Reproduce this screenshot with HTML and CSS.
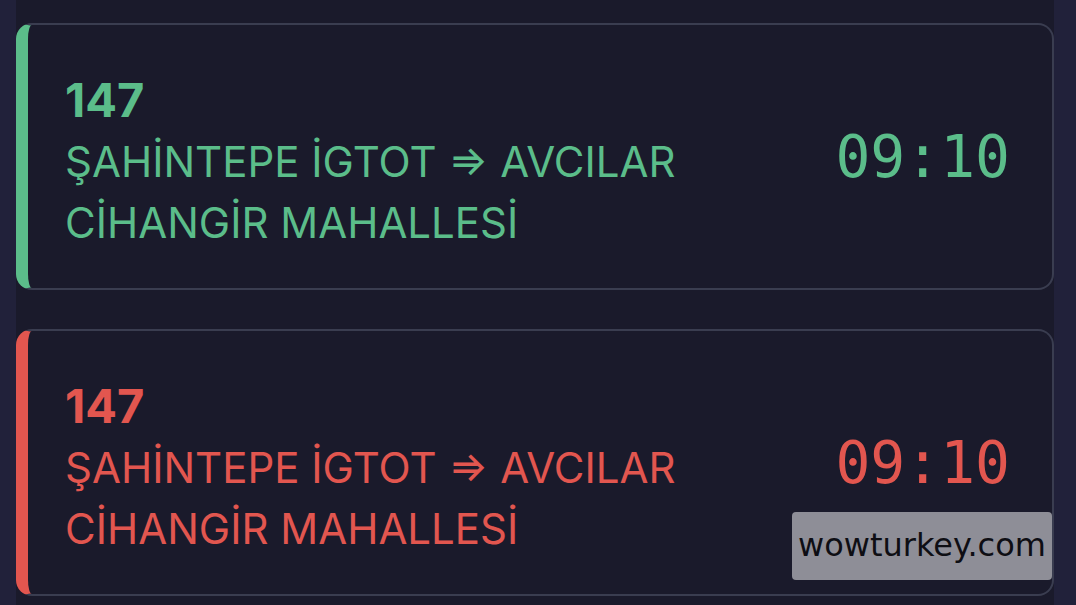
FILE: index.html
```html
<!DOCTYPE html>
<html lang="tr">
<head>
    <meta charset="UTF-8">
    <meta name="viewport" content="width=device-width, initial-scale=1.0">
    <title>Sefer Saatleri</title>
    <link rel="stylesheet" href="styles.css">
</head>
<body>

<div class="liste">
    <div class="sefer sefer-aktif">
        <div class="sefer-bilgi">
            <div class="hat-no">147</div>
            <div class="guzergah">ŞAHİNTEPE İGTOT ⇒ AVCILAR<br>CİHANGİR MAHALLESİ</div>
        </div>
        <div class="saat">09:10</div>
    </div>

    <div class="sefer sefer-iptal">
        <div class="sefer-bilgi">
            <div class="hat-no">147</div>
            <div class="guzergah">ŞAHİNTEPE İGTOT ⇒ AVCILAR<br>CİHANGİR MAHALLESİ</div>
        </div>
        <div class="saat">09:10</div>
        <div class="filigran">wowturkey.com</div>
    </div>
</div>

</body>
</html>
```

FILE: styles.css
```css
body {
    margin: 0;
    padding: 0;
    background-color: #21213a;
    font-family: 'Inter', 'Roboto', sans-serif;
    height: 605px;
    overflow: hidden;
}
.liste {
    margin: 0 22px 0 16px;
    background-color: #1a1a2b;
    padding: 23px 0 0;
    display: flex;
    flex-direction: column;
    gap: 39px;
    height: 582px;
}
.sefer {
    position: relative;
    display: flex;
    align-items: center;
    justify-content: space-between;
    height: 263px;
    box-sizing: content-box;
    padding: 0 42px 0 37px;
    border: 2px solid #3a3d50;
    border-left-width: 12px;
    border-radius: 16px;
    background-color: #1a1a2b;
}
.sefer-aktif {
    border-left-color: #5bbd8a;
    color: #5bbd8a;
}
.sefer-iptal {
    border-left-color: #e2564f;
    color: #e2564f;
}
.sefer-bilgi {
    display: flex;
    flex-direction: column;
    margin-top: 8px;
}
.hat-no {
    font-size: 47px;
    font-weight: 700;
    line-height: 62px;
}
.guzergah {
    font-size: 42px;
    line-height: 61px;
}
.saat {
    font-family: 'DejaVu Sans Mono', monospace;
    font-size: 58px;
}
.filigran {
    position: absolute;
    right: 0;
    bottom: 14px;
    width: 260px;
    height: 68px;
    line-height: 66px;
    text-align: center;
    background-color: #8e8e97;
    border-radius: 4px;
    color: #0e0e14;
    font-family: 'DejaVu Sans', sans-serif;
    font-size: 32px;
}
```
